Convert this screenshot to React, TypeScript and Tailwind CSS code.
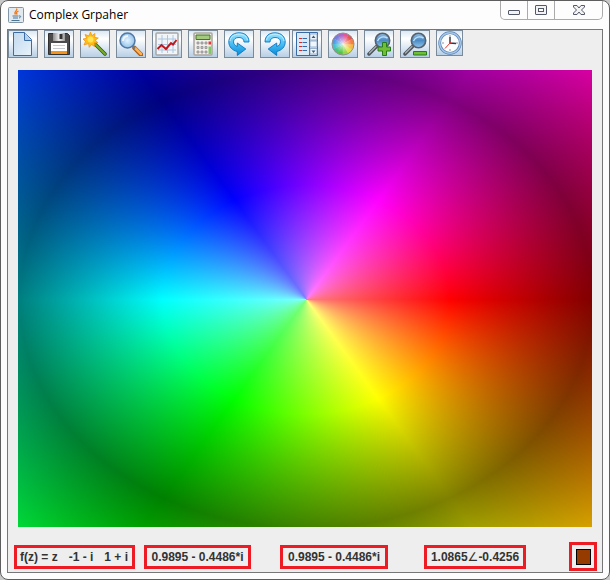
import { useEffect, useRef, type ReactNode } from "react";

const PLOT_WIDTH = 574;
const PLOT_HEIGHT = 457;

/** Colour of a complex value: the argument picks the hue, the modulus the lightness. */
function domainColor(re: number, im: number): [number, number, number] {
  const modulus = Math.hypot(re, im);
  let hue = (-Math.atan2(im, re) * 180) / Math.PI;
  if (hue < 0) hue += 360;
  const light = modulus <= 1 ? 0.75 - 0.5 * modulus : 0.25 + 0.42 * (modulus - 1);
  const chroma = Math.min(light, 1 - light);
  const channel = (n: number) => {
    const k = (n + hue / 30) % 12;
    return 255 * (light - chroma * Math.max(-1, Math.min(k - 3, 9 - k, 1)));
  };
  return [channel(0), channel(8), channel(4)];
}

function Plot() {
  const ref = useRef<HTMLCanvasElement>(null);
  useEffect(() => {
    const ctx = ref.current?.getContext("2d");
    if (!ctx) return;
    const image = ctx.createImageData(PLOT_WIDTH, PLOT_HEIGHT);
    for (let y = 0; y < PLOT_HEIGHT; y++) {
      for (let x = 0; x < PLOT_WIDTH; x++) {
        const re = (x - 288) / 287;
        const im = (229 - y) / 229;
        const [r, g, b] = domainColor(re, im);
        const i = (y * PLOT_WIDTH + x) * 4;
        image.data[i] = r;
        image.data[i + 1] = g;
        image.data[i + 2] = b;
        image.data[i + 3] = 255;
      }
    }
    ctx.putImageData(image, 0, 0);
  }, []);
  return (
    <canvas
      ref={ref}
      width={PLOT_WIDTH}
      height={PLOT_HEIGHT}
      role="img"
      aria-label="Domain colouring of f(z) = z"
      className="block w-full"
    />
  );
}

function Icon({ children }: { children: ReactNode }) {
  return (
    <svg viewBox="0 0 24 24" className="size-6 shrink-0" aria-hidden="true">
      {children}
    </svg>
  );
}

const arrow =
  "M22 10C22 4 18 .8 12 .8 5.500.8 1.800 5 1.800 10c0 5 3.700 8.500 8.500 9.500v4L18.800 17l-8.500-6v3.500C8 13.800 6.500 12 6.500 9.800 6.500 7 8.500 5.500 12 5.500c3 0 5 1.700 5 4.500Z";

const newIcon = (
  <Icon>
    <path d="M2.500.5h11l7 7v16h-18Z" fill="url(#paper)" stroke="#3c6ca5" />
    <path d="M13.500.5v8h7" fill="#eef5fb" stroke="#3c6ca5" />
    <path d="M14 1.500l6 6.500h-6Z" fill="#b5d1ea" />
  </Icon>
);

const saveIcon = (
  <Icon>
    <path d="M1.500 1.500h19l2 2v19h-21Z" fill="#4b4b4b" stroke="#303030" />
    <path d="M6 1h12v8H6Z" fill="url(#metal)" />
    <path d="M12.500 2h3v5h-3Z" fill="#343434" />
    <path d="M4 11h16v9H4Z" fill="#fff" />
    <path d="M6 13.500h12M6 16.500h12" stroke="#c4cbd0" />
    <path d="M4 19h16v3H4Z" fill="#f79418" />
  </Icon>
);

const wandIcon = (
  <Icon>
    <path d="M11 11l11 11" stroke="#35540f" strokeWidth="3.500" strokeLinecap="round" />
    <path d="M11 11l11 11" stroke="#79ad2b" strokeWidth="2" strokeLinecap="round" />
    <path
      d="M7.500 0l1.400 3.600L12 1.500l-.4 3.800 3.700.7-3 2.200 2.700 2.600-3.800.1.300 3.700-3-2.200-2.300 3-.6-3.800L1 13l1.500-3.500L0 7l3.600-.8L2 2.500l3.800 1.300Z"
      fill="#ffbd17"
      stroke="#ee8e08"
      strokeWidth=".7"
    />
    <circle cx="7.500" cy="7.500" r="3" fill="#ffe553" />
  </Icon>
);

const searchIcon = (
  <Icon>
    <path d="M15.500 16l6.500 6.500" stroke="#a75b17" strokeWidth="4.500" strokeLinecap="round" />
    <path d="M16 16l6 6" stroke="#ffb253" strokeWidth="2.500" strokeLinecap="round" />
    <path d="M13.500 14l2.500 2.500" stroke="#777" strokeWidth="2" />
    <circle cx="8.500" cy="8.500" r="7.500" fill="url(#lens)" stroke="#5277a0" strokeWidth="1.500" />
    <path d="M4 9c0-3 2-5 5-5" stroke="#fff" strokeWidth="2" fill="none" opacity=".8" />
  </Icon>
);

const chartIcon = (
  <Icon>
    <rect x="1" y="1" width="22" height="22" rx="1" fill="#f1f5f8" stroke="#a7a7a7" strokeWidth="1.500" />
    <path d="M7 3v18M12.500 3v18M18 3v18M3 7h18M3 12.500h18M3 18h18" stroke="#a9c5df" />
    <path d="M2.500 17l4-4 4.500 4 5-6 2 1.500L21.500 8" stroke="#c3161c" strokeWidth="2" fill="none" />
  </Icon>
);

const calculatorIcon = (
  <Icon>
    <rect x="3" y="1" width="18" height="22" rx="1" fill="#f0efeb" stroke="#aaa79f" strokeWidth="1.500" />
    <path d="M5 3h14v4.500H5Z" fill="#a3cb7d" stroke="#477322" />
    <path d="M6 10h2v2H6Zm4 0h2v2h-2Zm4 0h2v2h-2Zm-8 4.500h2v2H6Zm4 0h2v2h-2Zm4 0h2v2h-2ZM6 19h2v2H6Zm4 0h2v2h-2Zm4 0h2v2h-2Z" fill="#c5c5c5" stroke="#868686" strokeWidth=".7" />
    <path d="M17.500 9.500h2.500v3h-2.500Z" fill="#e33837" />
    <path d="M17.500 14.500h2.500V22h-2.500Z" fill="#83c466" />
  </Icon>
);

const undoIcon = (
  <Icon>
    <path d={arrow} fill="url(#arrowFill)" stroke="#0876c4" strokeWidth=".9" />
    <path d="M3 9C3.500 5 7 2.200 12 2.200c4.500 0 7.500 2 8.500 6" fill="none" stroke="#c4efff" />
  </Icon>
);

const redoIcon = (
  <Icon>
    <g transform="matrix(-1 0 0 1 24 0)">
      <path d={arrow} fill="url(#arrowFill)" stroke="#0876c4" strokeWidth=".9" />
      <path d="M3 9C3.500 5 7 2.200 12 2.200c4.500 0 7.500 2 8.500 6" fill="none" stroke="#c4efff" />
    </g>
  </Icon>
);

const listIcon = (
  <Icon>
    <path d="M1.500.5h21v23h-21Z" fill="#dbe9f5" stroke="#386aa6" />
    <path d="M14.500.5v23" stroke="#386aa6" />
    <path d="M4 6.500h3M4 10.500h3M4 14.500h3M4 18.500h3" stroke="#e1271e" strokeWidth="1.200" />
    <path d="M7.500 6.500H12M7.500 10.500H12M7.500 14.500H12M7.500 18.500H12" stroke="#366aa8" />
    <path d="M15 2h7v6h-7Zm0 7h7v6h-7Zm0 7.500h7V22h-7Z" fill="#eef5fb" stroke="#799abd" strokeWidth=".7" />
    <path d="M16.500 6l2-2.500 2 2.500Zm0 12.500 2 2.500 2-2.500Z" fill="#385b83" />
  </Icon>
);

const wheelColors = [
  "#e8403c", "#e0458c", "#a456bd", "#6a6cd6", "#3f8ee3", "#2fb8d0",
  "#2fbb74", "#3fbf34", "#8bd035", "#dce030", "#f6b12e", "#f47030",
];

const wheelIcon = (
  <Icon>
    {wheelColors.map((color, i) => (
      <path key={color} d="M12 12V1A11 11 0 0 1 17.800 2.650Z" fill={color} transform={`rotate(${i * -30 + 30} 12 12)`} />
    ))}
    <circle cx="12" cy="12" r="11" fill="url(#wheelGlow)" stroke="#8f8f8f" strokeWidth="1" />
  </Icon>
);

const zoomBase = (
  <>
    <path d="M9.500 14.500L2 22" stroke="#4e555c" strokeWidth="3.500" strokeLinecap="round" />
    <path d="M9 14.500L2.500 21" stroke="#a8b0b6" strokeWidth="1.200" strokeLinecap="round" />
    <circle cx="15.500" cy="8.500" r="7.200" fill="url(#zoomLens)" stroke="#58616b" strokeWidth="1.600" />
    <path d="M10.500 9c2-4 6-5 10-3" stroke="#c3e3fb" strokeWidth="1.500" fill="none" />
  </>
);

const zoomInIcon = (
  <Icon>
    {zoomBase}
    <path d="M15.500 10.500h4V15h4v4h-4v4.500h-4V19h-4.500v-4h4.500Z" fill="#70bd36" stroke="#27791c" />
  </Icon>
);

const zoomOutIcon = (
  <Icon>
    {zoomBase}
    <path d="M10.500 19.500h13v3.500h-13Z" fill="#70bd36" stroke="#27791c" />
  </Icon>
);

const clockIcon = (
  <Icon>
    <circle cx="12" cy="12" r="10.300" fill="#fcfdfd" stroke="#5580b4" strokeWidth="2.800" />
    <circle cx="12" cy="12" r="10.300" fill="none" stroke="#a5c6e6" strokeWidth="1.400" />
    <path d="M12 4v2M12 18v2M4 12h2M18 12h2" stroke="#8a949e" />
    <path d="M12 6v6l6 .5" stroke="#333c46" strokeWidth="1.500" fill="none" />
    <path d="M13 11l-6 6.500" stroke="#dc3535" />
  </Icon>
);

const mainTools: [string, ReactNode][] = [
  ["New", newIcon],
  ["Save", saveIcon],
  ["Wizard", wandIcon],
  ["Search", searchIcon],
  ["Chart", chartIcon],
  ["Calculator", calculatorIcon],
  ["Undo", undoIcon],
  ["Redo", redoIcon],
];

const viewTools: [string, ReactNode][] = [
  ["List", listIcon],
  ["Colour wheel", wheelIcon],
  ["Zoom in", zoomInIcon],
  ["Zoom out", zoomOutIcon],
];

const toolClass =
  "flex shrink-0 items-center justify-center overflow-hidden border border-[#7a8a99] bg-linear-to-b from-[#dce8f2] via-white via-30% to-[#b8cfe5]";

function ToolButton({ label, children }: { label: string; children: ReactNode }) {
  return (
    <button type="button" aria-label={label} className={`${toolClass} h-7 w-[30px]`}>
      {children}
    </button>
  );
}

function Gradients() {
  return (
    <svg className="absolute size-0" aria-hidden="true">
      <defs>
        <linearGradient id="paper" x2="1" y2="1">
          <stop stopColor="#c1d9ee" />
          <stop offset="1" stopColor="#e8f2fa" />
        </linearGradient>
        <linearGradient id="metal">
          <stop stopColor="#8c8c8c" />
          <stop offset=".5" stopColor="#eee" />
          <stop offset="1" stopColor="#999" />
        </linearGradient>
        <radialGradient id="lens">
          <stop stopColor="#e4f4ff" />
          <stop offset="1" stopColor="#91c1ea" />
        </radialGradient>
        <linearGradient id="zoomLens" x2="0" y2="1">
          <stop stopColor="#8fbce3" />
          <stop offset=".5" stopColor="#4d8bc4" />
          <stop offset="1" stopColor="#93c5ed" />
        </linearGradient>
        <linearGradient id="arrowFill" x2="0" y2="1">
          <stop stopColor="#9ee5ff" />
          <stop offset=".5" stopColor="#47bdf3" />
          <stop offset="1" stopColor="#0789d7" />
        </linearGradient>
        <radialGradient id="wheelGlow">
          <stop stopColor="#fff" stopOpacity=".8" />
          <stop offset=".8" stopColor="#fff" stopOpacity=".1" />
        </radialGradient>
      </defs>
    </svg>
  );
}

const captionClass = "flex h-[18px] items-center justify-center";

function TitleBar() {
  return (
    <header className="flex h-7 items-start justify-between">
      <div className="flex h-7 items-center gap-[5px] pl-px">
        <svg viewBox="0 0 16 16" className="size-4" aria-hidden="true">
          <rect x=".5" y=".5" width="15" height="15" rx="1" fill="#e2eaf0" stroke="#8195a6" />
          <path d="M8.500 1.500c2 2-3.500 3-1 6M10.500 4c-2.500 1.200-2.500 2-1.200 3.500" fill="none" stroke="#ef7a1a" strokeWidth="1.300" />
          <path d="M4.500 9h6M5 11h5M3.500 13.500h8M11 9c2.500-.5 2 1.500 0 2" fill="none" stroke="#4c7594" />
        </svg>
        <h1 className="font-['Open_Sans','Noto_Sans',sans-serif] text-xs text-black">Complex Grpaher</h1>
      </div>
      <div className="flex rounded-b-[5px] border border-t-0 border-[#aaa]">
        <button type="button" aria-label="Minimize" className={`${captionClass} w-[27px] border-r border-[#aaa]`}>
          <svg viewBox="0 0 14 12" className="h-3 w-3.5" aria-hidden="true">
            <rect x="1.500" y="6.500" width="11" height="4" rx=".5" fill="#f3f3f3" stroke="#53576a" />
          </svg>
        </button>
        <button type="button" aria-label="Maximize" className={`${captionClass} w-[27px] border-r border-[#aaa]`}>
          <svg viewBox="0 0 14 12" className="h-3 w-3.5" aria-hidden="true">
            <rect x="1.500" y="1.500" width="11" height="9" rx=".5" fill="#f3f3f3" stroke="#53576a" />
            <rect x="4.500" y="4.500" width="5" height="3" fill="#fff" stroke="#53576a" />
          </svg>
        </button>
        <button type="button" aria-label="Close" className={`${captionClass} w-[47px]`}>
          <svg viewBox="0 0 14 12" className="h-3 w-3.5" aria-hidden="true">
            <path d="M1.500 1.500h3.500l2 2.500 2-2.500h3.500v1.500L9.500 6l3 3v1.500H9L7 8l-2 2.500H1.500V9l3-3-3-3Z" fill="#f3f3f3" stroke="#53576a" />
          </svg>
        </button>
      </div>
    </header>
  );
}

const readoutClass = "flex items-center whitespace-pre border-3 border-[#ed1c24]";

export default function App() {
  return (
    <div className="bg-[#c8c8c8] font-['Liberation_Sans',Arial,sans-serif]">
      <Gradients />
      <div className="rounded-lg border border-[#5e5e5e] bg-[#fdfdfd] px-1.5 pb-1.5">
        <TitleBar />
        <main className="border border-[#777] bg-[#eee]">
          <div role="toolbar" aria-label="Tools" className="flex items-start gap-0.5">
            <div className="flex gap-1.5">
              {mainTools.map(([label, icon]) => (
                <ToolButton key={label} label={label}>{icon}</ToolButton>
              ))}
            </div>
            <div className="flex items-start gap-1.5">
              {viewTools.map(([label, icon]) => (
                <ToolButton key={label} label={label}>{icon}</ToolButton>
              ))}
              <button type="button" aria-label="Clock" className={`${toolClass} h-[26px] w-[27px]`}>
                {clockIcon}
              </button>
            </div>
          </div>
          <div className="px-2.5 pt-3">
            <Plot />
          </div>
          <footer className="flex items-center pt-[15px] pr-[5px] pb-px pl-1.5 text-xs font-bold text-[#333]">
            <div className={`${readoutClass} h-6 w-[121px] gap-[11px] px-[3px]`}>
              <span>f(z) = z</span>
              <span>-1 - i</span>
              <span>1 + i</span>
            </div>
            <div className={`${readoutClass} ml-[9px] h-6 w-[107px] justify-center`}>0.9895 - 0.4486*i</div>
            <div className={`${readoutClass} ml-[29px] h-6 w-[108px] justify-center`}>0.9895 - 0.4486*i</div>
            <div className={`${readoutClass} ml-9 h-6 w-[102px] justify-center`}>
              <span>1.0865</span>
              <span className="font-['DejaVu_Sans',sans-serif] font-normal">∠</span>
              <span>-0.4256</span>
            </div>
            <div className="ml-auto flex h-[29px] w-7 items-center justify-center border-3 border-[#ed1c24]">
              <div role="img" aria-label="Colour at the pointer" className="h-4 w-[15px] border border-black bg-[#953b00]" />
            </div>
          </footer>
        </main>
      </div>
    </div>
  );
}
